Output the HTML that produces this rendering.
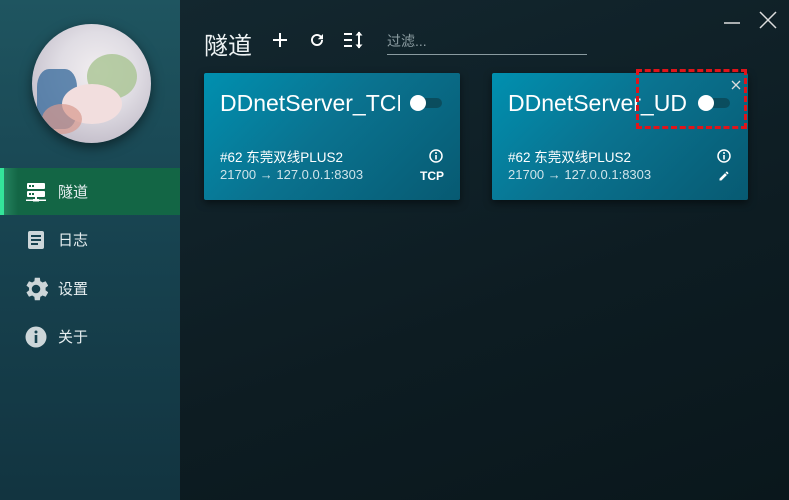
<!DOCTYPE html>
<html><head><meta charset="utf-8"><style>
*{margin:0;padding:0;box-sizing:border-box}
body{width:789px;height:500px;overflow:hidden;font-family:"Liberation Sans","Noto Sans CJK SC",sans-serif;background:#0f1f26;position:relative;color:#fff}
.side{position:absolute;left:0;top:0;width:180px;height:500px;background:linear-gradient(180deg,#1f5560 0%,#17424f 50%,#123440 100%)}
.main{position:absolute;left:180px;top:0;width:609px;height:500px;background:linear-gradient(160deg,#13272f 0%,#0d1c22 60%,#0a171c 100%)}
.avatar{position:absolute;left:32px;top:24px;width:119px;height:119px;border-radius:50%;background:radial-gradient(circle at 55% 40%,#f2eef0 0%,#e0dde4 40%,#c9c4cf 70%,#b8b0bb 100%);box-shadow:0 4px 12px rgba(0,0,0,.5);overflow:hidden}
.avatar i{position:absolute;display:block;border-radius:50%}
.nav{position:absolute;left:0;width:180px;height:47px;display:flex;align-items:center;font-size:15px;color:#e6eef0}
.nav svg{position:absolute;left:26px}
.nav span{position:absolute;left:58px}
.act{top:168px;background:linear-gradient(90deg,#2a8a66 0,#136645 18px,#136645 100%)}
.act:before{content:"";position:absolute;left:0;top:0;width:4px;height:47px;background:#34e49a}
.title{position:absolute;left:204px;top:26px;font-size:24px;color:#eef3f4}
.card{position:absolute;top:73px;width:256px;height:127px;background:linear-gradient(135deg,#0090b0 0%,#0a7390 45%,#075a72 100%);box-shadow:0 3px 8px rgba(0,0,0,.5);border-radius:2px}
.card .n{position:absolute;left:16px;top:17px;font-size:23px;width:180px;overflow:hidden;white-space:nowrap}
.card .l1{position:absolute;left:16px;top:73px;font-size:13.5px}
.card .l2{position:absolute;left:16px;top:94px;font-size:13px;color:#cfe4ea}
.tg{position:absolute;left:206px;top:23px;width:32px;height:14px}
.tg:before{content:"";position:absolute;left:6px;top:2px;width:26px;height:10px;border-radius:5px;background:#0a4d5e}
.tg:after{content:"";position:absolute;left:0;top:-1px;width:16px;height:16px;border-radius:50%;background:#fff}
.filter{position:absolute;left:387px;top:31px;width:200px;border-bottom:1px solid #8a9ba0;font-size:14px;color:#8d9ea3;padding-bottom:3px}
</style></head><body>
<div class="side">
 <div class="avatar">
  <i style="left:55px;top:30px;width:50px;height:45px;background:#a9c492;opacity:.8"></i>
  <i style="left:5px;top:45px;width:40px;height:60px;background:#3f6f9f;border-radius:30%;opacity:.8"></i>
  <i style="left:30px;top:60px;width:60px;height:40px;background:#f2dede"></i>
  <i style="left:10px;top:80px;width:40px;height:30px;background:#d89a8e;opacity:.7"></i>
 </div>
 <div class="nav act"><svg width="20" height="20" viewBox="0 0 20 20"><rect x="1" y="1" width="18" height="6" rx="1" fill="#fff"/><rect x="1" y="9" width="18" height="6" rx="1" fill="#fff"/><rect x="3" y="3" width="2" height="2" fill="#136645"/><rect x="6" y="3" width="2" height="2" fill="#136645"/><rect x="3" y="11" width="2" height="2" fill="#136645"/><rect x="6" y="11" width="2" height="2" fill="#136645"/><rect x="9" y="15" width="2" height="3" fill="#fff"/><rect x="0" y="17.5" width="20" height="1.5" fill="#fff"/><rect x="7" y="17" width="6" height="2.5" fill="#fff"/></svg><span>隧道</span></div>
 <div class="nav" style="top:216px"><svg width="20" height="20" viewBox="0 0 20 20"><rect x="2" y="1" width="16" height="18" rx="2" fill="#cdd6d9"/><rect x="5" y="5" width="10" height="2" fill="#17424f"/><rect x="5" y="9" width="10" height="2" fill="#17424f"/><rect x="5" y="13" width="7" height="2" fill="#17424f"/></svg><span>日志</span></div>
 <div class="nav" style="top:265px"><svg width="24" height="24" viewBox="3 3 18 18" style="left:24px"><path fill="#cdd6d9" d="M19.14 12.94a7 7 0 000-1.88l2.03-1.58-1.92-3.32-2.39.96a7 7 0 00-1.62-.94L14.9 3.6h-3.8l-.34 2.58a7 7 0 00-1.62.94l-2.39-.96-1.92 3.32 2.03 1.58a7 7 0 000 1.88l-2.03 1.58 1.920 3.32 2.39-.96c.5.38 1.04.7 1.62.94l.34 2.58h3.8l.34-2.58a7 7 0 001.62-.94l2.39.96 1.92-3.32zM12 15.2A3.2 3.2 0 1112 8.8a3.2 3.2 0 010 6.4z"/></svg><span>设置</span></div>
 <div class="nav" style="top:313px"><svg width="22" height="22" viewBox="0 0 22 22" style="left:25px"><circle cx="11" cy="11" r="10.5" fill="#cdd6d9"/><rect x="9.7" y="9" width="2.6" height="8" fill="#17424f"/><circle cx="11" cy="6" r="1.5" fill="#17424f"/></svg><span>关于</span></div>
</div>
<div class="main"></div>
<div class="title">隧道</div>
<svg style="position:absolute;left:272px;top:32px" width="16" height="16" viewBox="0 0 16 16"><path d="M8 1v14M1 8h14" stroke="#fff" stroke-width="2"/></svg>
<svg style="position:absolute;left:308px;top:31px" width="18" height="18" viewBox="0 0 24 24"><path fill="#fff" d="M17.65 6.35A7.95 7.95 0 0012 4a8 8 0 108 8h-2.5A5.5 5.5 0 1112 6.5c1.52 0 2.870.62 3.87 1.63L13 11h7V4z"/></svg>
<svg style="position:absolute;left:343px;top:30px" width="22" height="20" viewBox="0 0 22 20"><path d="M1 4h8M1 10h8M1 16h8" stroke="#fff" stroke-width="2"/><path d="M16 2v16" stroke="#fff" stroke-width="2"/><path d="M12.5 5.5L16 1.5l3.5 4zM12.5 14.5L16 18.5l3.5-4z" fill="#fff"/></svg>
<div class="filter">过滤...</div>
<svg style="position:absolute;left:722px;top:12px" width="20" height="16"><path d="M2 11h16" stroke="#ddd" stroke-width="1.5"/></svg>
<svg style="position:absolute;left:758px;top:10px" width="20" height="20"><path d="M2 2l16 16M18 2L2 18" stroke="#ddd" stroke-width="1.5"/></svg>
<div class="card" style="left:204px">
 <div class="n">DDnetServer_TCP</div>
 <div class="tg"></div>
 <div class="l1">#62 东莞双线PLUS2</div>
 <div class="l2">21700 → 127.0.0.1:8303</div>
 <svg style="position:absolute;left:225px;top:76px" width="14" height="14"><circle cx="7" cy="7" r="6" fill="none" stroke="#fff" stroke-width="1.5"/><rect x="6.2" y="6" width="1.6" height="4.5" fill="#fff"/><circle cx="7" cy="4" r="1" fill="#fff"/></svg>
 <div style="position:absolute;left:216px;top:96px;font-size:12px;font-weight:bold">TCP</div>
</div>
<div class="card" style="left:492px">
 <div class="n">DDnetServer_UDP</div>
 <div class="tg"></div>
 <div class="l1">#62 东莞双线PLUS2</div>
 <div class="l2">21700 → 127.0.0.1:8303</div>
 <svg style="position:absolute;left:225px;top:76px" width="14" height="14"><circle cx="7" cy="7" r="6" fill="none" stroke="#fff" stroke-width="1.5"/><rect x="6.2" y="6" width="1.6" height="4.5" fill="#fff"/><circle cx="7" cy="4" r="1" fill="#fff"/></svg>
 <svg style="position:absolute;left:226px;top:97px" width="12" height="12" viewBox="0 0 24 24"><path fill="#fff" d="M3 17.25V21h3.75L17.81 9.94l-3.75-3.75zM20.71 7.04a1 1 0 000-1.41l-2.34-2.34a1 1 0 00-1.41 0l-1.83 1.83 3.75 3.75z"/></svg>
 <svg style="position:absolute;left:239px;top:7px" width="10" height="10"><path d="M1 1l8 8M9 1L1 9" stroke="#ddd" stroke-width="1.3"/></svg>
</div>
<div style="position:absolute;left:636px;top:69px;width:111px;height:60px;border:3px dashed #e0141a"></div>
</body></html>
